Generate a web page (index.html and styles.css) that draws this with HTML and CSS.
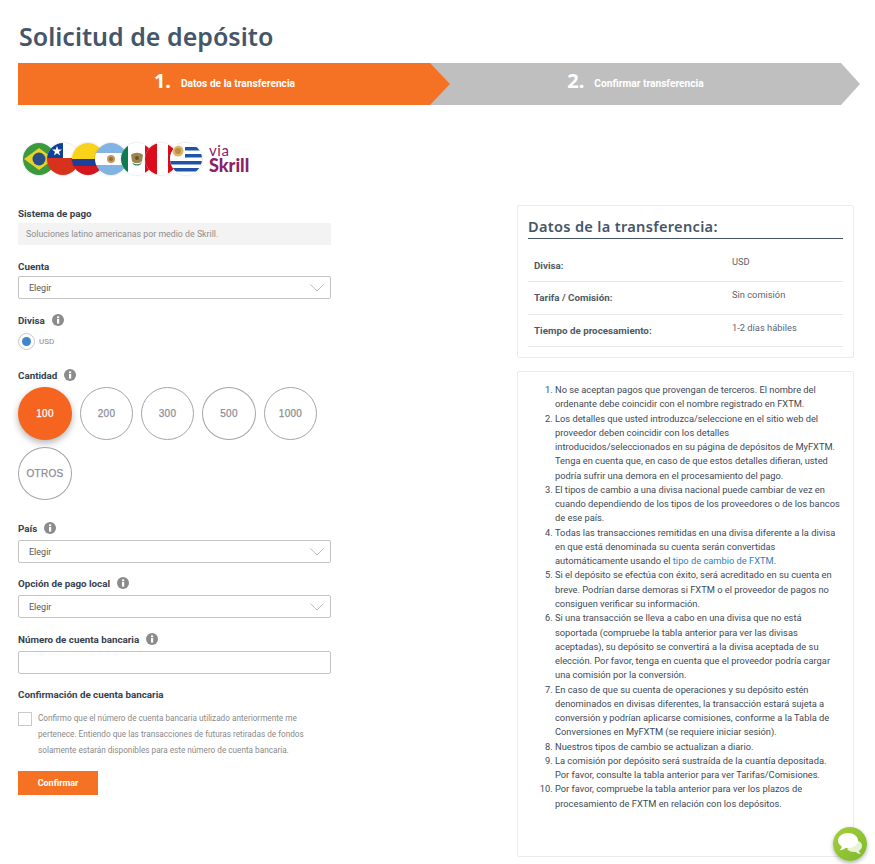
FILE: index.html
```html
<!DOCTYPE html>
<html lang="es">
<head>
<meta charset="utf-8">
<title>Solicitud de depósito</title>
<link rel="stylesheet" href="styles.css">
</head>
<body>
<svg class="defs" width="0" height="0" aria-hidden="true">
  <symbol id="info" viewBox="0 0 12 12">
    <circle cx="6" cy="6" r="6" fill="#8b8b8b"/>
    <rect x="5" y="5" width="2.2" height="4.6" fill="#fff"/>
    <rect x="5" y="2.4" width="2.2" height="1.8" fill="#fff"/>
  </symbol>
  <symbol id="chev" viewBox="0 0 14 8">
    <path d="M.5.5 7 7 13.5.5" fill="none" stroke="#bdbdbd" stroke-width="1"/>
  </symbol>
</svg>
<main class="page">
  <h1 class="title">Solicitud de depósito</h1>
  <ol class="steps">
    <li class="step step-on"><b class="step-num">1.</b><span class="step-text">Datos de la transferencia</span></li>
    <li class="step step-off"><b class="step-num">2.</b><span class="step-text">Confirmar transferencia</span></li>
  </ol>

  <div class="logo">
    <svg class="flags" width="190" height="36" viewBox="0 0 190 36">
      <defs>
        <clipPath id="c1"><circle cx="17" cy="18" r="16"/></clipPath>
        <clipPath id="c2"><circle cx="41" cy="18" r="16"/></clipPath>
        <clipPath id="c3"><circle cx="66" cy="18" r="16"/></clipPath>
        <clipPath id="c4"><circle cx="89" cy="18" r="16"/></clipPath>
        <clipPath id="c5"><circle cx="115" cy="18" r="16"/></clipPath>
        <clipPath id="c6"><circle cx="139" cy="18" r="16"/></clipPath>
        <clipPath id="c7"><circle cx="164" cy="18" r="16"/></clipPath>
        <filter id="halo" x="-20%" y="-20%" width="140%" height="140%"><feDropShadow dx="0" dy="0" stdDeviation="1.2" flood-color="#000" flood-opacity=".18"/></filter>
      </defs>
      <g filter="url(#halo)"><g clip-path="url(#c1)">
        <rect x="1" y="2" width="32" height="32" fill="#3b9a3f"/>
        <path d="M17 7 32 18 17 29 2 18z" fill="#e9d22c"/>
        <circle cx="17" cy="18" r="6.500" fill="#2a4f86"/>
      </g></g>
      <g filter="url(#halo)"><g clip-path="url(#c2)">
        <rect x="25" y="2" width="32" height="16" fill="#fff"/>
        <rect x="25" y="2" width="16" height="15" fill="#113f96"/>
        <rect x="25" y="17" width="32" height="17" fill="#d6321f"/>
        <path d="M35 5l1.300 3.600h3.700l-3 2.200 1.100 3.600-3.100-2.200-3.100 2.200 1.100-3.600-3-2.200h3.700z" fill="#fff"/>
      </g></g>
      <g filter="url(#halo)"><g clip-path="url(#c3)">
        <rect x="50" y="2" width="32" height="16" fill="#f9d21d"/>
        <rect x="50" y="18" width="32" height="7" fill="#1e3f99"/>
        <rect x="50" y="25" width="32" height="9" fill="#d3151f"/>
      </g></g>
      <g filter="url(#halo)"><g clip-path="url(#c4)">
        <rect x="73" y="2" width="32" height="11" fill="#82b4e3"/>
        <rect x="73" y="12" width="32" height="12" fill="#fff"/>
        <rect x="73" y="24" width="32" height="10" fill="#82b4e3"/>
        <circle cx="89" cy="18" r="4" fill="#c9975a"/>
        <circle cx="89" cy="18" r="2" fill="#8f6b3d"/>
      </g></g>
      <g filter="url(#halo)"><g clip-path="url(#c5)">
        <rect x="99" y="2" width="32" height="32" fill="#fff"/>
        <rect x="99" y="2" width="7" height="32" fill="#0b7a4f"/>
        <rect x="123" y="2" width="8" height="32" fill="#d8101f"/>
        <path d="M109 14c3-3 9-3 12 0l-1 6c-2 3-8 3-10 0z" fill="#9c8650"/>
        <path d="M110 21c2 3 8 3 10 0l-1 2c-2 2-6 2-8 0z" fill="#3f8d5a"/>
        <circle cx="115" cy="17" r="2" fill="#6b5528"/>
      </g></g>
      <g filter="url(#halo)"><g clip-path="url(#c6)">
        <rect x="123" y="2" width="32" height="32" fill="#fff"/>
        <rect x="123" y="2" width="12" height="32" fill="#d9101f"/>
        <rect x="146" y="2" width="9" height="32" fill="#d9101f"/>
      </g></g>
      <g filter="url(#halo)"><g clip-path="url(#c7)">
        <rect x="148" y="2" width="32" height="32" fill="#fff"/>
        <rect x="148" y="6" width="32" height="3.500" fill="#1f55a8"/>
        <rect x="148" y="13" width="32" height="3.500" fill="#1f55a8"/>
        <rect x="148" y="20" width="32" height="3.500" fill="#1f55a8"/>
        <rect x="148" y="27" width="32" height="3.500" fill="#1f55a8"/>
        <rect x="148" y="2" width="15" height="16" fill="#fff"/>
        <circle cx="156" cy="10" r="5.500" fill="#d9b66a"/>
        <circle cx="156" cy="10" r="3" fill="#b98f45"/>
      </g></g>
    </svg>
    <div class="via"><span class="via-a">via</span><span class="via-b">Skrill</span></div>
  </div>

  <div class="columns">
    <form class="form">
      <div class="field field-tight">
        <div class="label">Sistema de pago</div>
        <div class="readonly">Soluciones latino americanas por medio de Skrill.</div>
      </div>
      <div class="field field-tight">
        <div class="label">Cuenta</div>
        <div class="select"><span>Elegir</span><svg class="chev"><use href="#chev"/></svg></div>
      </div>
      <div class="field field-divisa">
        <div class="label">Divisa <svg class="info"><use href="#info"/></svg></div>
        <div class="radio-row"><span class="radio"><i class="dot"></i></span><span class="radio-text">USD</span></div>
      </div>
      <div class="field field-amount">
        <div class="label">Cantidad <svg class="info"><use href="#info"/></svg></div>
        <div class="amounts">
          <span class="amount amount-wide amount-on">100</span>
          <span class="amount">200</span>
          <span class="amount">300</span>
          <span class="amount amount-wide">500</span>
          <span class="amount">1000</span>
          <span class="amount amount-wide">OTROS</span>
        </div>
      </div>
      <div class="field">
        <div class="label">País <svg class="info"><use href="#info"/></svg></div>
        <div class="select"><span>Elegir</span><svg class="chev"><use href="#chev"/></svg></div>
      </div>
      <div class="field field-wide">
        <div class="label">Opción de pago local <svg class="info"><use href="#info"/></svg></div>
        <div class="select"><span>Elegir</span><svg class="chev"><use href="#chev"/></svg></div>
      </div>
      <div class="field">
        <div class="label">Número de cuenta bancaria <svg class="info"><use href="#info"/></svg></div>
        <div class="select"></div>
      </div>
      <div class="field">
        <div class="label">Confirmación de cuenta bancaria</div>
        <div class="check-row">
          <span class="check"></span>
          <p class="check-text">Confirmo que el número de cuenta bancaria utilizado anteriormente me pertenece. Entiendo que las transacciones de futuras retiradas de fondos solamente estarán disponibles para este número de cuenta bancaria.</p>
        </div>
      </div>
      <div class="submit">Confirmar</div>
    </form>

    <aside class="side">
      <section class="panel panel-data">
        <h2 class="panel-title">Datos de la transferencia:</h2>
        <div class="row"><b class="row-key">Divisa:</b><span class="row-val">USD</span></div>
        <div class="row"><b class="row-key">Tarifa / Comisión:</b><span class="row-val">Sin comisión</span></div>
        <div class="row"><b class="row-key">Tiempo de procesamiento:</b><span class="row-val">1-2 días hábiles</span></div>
      </section>
      <section class="panel panel-notes">
        <ol class="notes">
          <li>No se aceptan pagos que provengan de terceros. El nombre del<br>ordenante debe coincidir con el nombre registrado en FXTM.</li>
          <li>Los detalles que usted introduzca/seleccione en el sitio web del<br>proveedor deben coincidir con los detalles<br>introducidos/seleccionados en su página de depósitos de MyFXTM.<br>Tenga en cuenta que, en caso de que estos detalles difieran, usted<br>podría sufrir una demora en el procesamiento del pago.</li>
          <li>El tipos de cambio a una divisa nacional puede cambiar de vez en<br>cuando dependiendo de los tipos de los proveedores o de los bancos<br>de ese país.</li>
          <li>Todas las transacciones remitidas en una divisa diferente a la divisa<br>en que está denominada su cuenta serán convertidas<br>automáticamente usando el <a class="link">tipo de cambio de FXTM</a>.</li>
          <li>Si el depósito se efectúa con éxito, será acreditado en su cuenta en<br>breve. Podrían darse demoras si FXTM o el proveedor de pagos no<br>consiguen verificar su información.</li>
          <li>Si una transacción se lleva a cabo en una divisa que no está<br>soportada (compruebe la tabla anterior para ver las divisas<br>aceptadas), su depósito se convertirá a la divisa aceptada de su<br>elección. Por favor, tenga en cuenta que el proveedor podría cargar<br>una comisión por la conversión.</li>
          <li>En caso de que su cuenta de operaciones y su depósito estén<br>denominados en divisas diferentes, la transacción estará sujeta a<br>conversión y podrían aplicarse comisiones, conforme a la Tabla de<br>Conversiones en MyFXTM (se requiere iniciar sesión).</li>
          <li>Nuestros tipos de cambio se actualizan a diario.</li>
          <li>La comisión por depósito será sustraída de la cuantía depositada.<br>Por favor, consulte la tabla anterior para ver Tarifas/Comisiones.</li>
          <li>Por favor, compruebe la tabla anterior para ver los plazos de<br>procesamiento de FXTM en relación con los depósitos.</li>
        </ol>
      </section>
    </aside>
  </div>
</main>
<div class="chat">
  <svg width="26" height="24" viewBox="0 0 26 24">
    <path d="M17 8c4.500 0 8 2.500 8 6 0 2-1.200 3.700-3 4.800.2 1.200 1 2.400 2 3.200-2.200 0-4-.8-5.300-2-.6.100-1.100.100-1.700.100-3 0-5.500-1.200-6.800-3z" fill="#e8f3d6"/>
    <path d="M11 1c5.500 0 10 3.300 10 7.500S16.500 16 11 16c-.8 0-1.500-.1-2.200-.2C7.300 17.300 5 18.200 2.500 18.200c1.200-1 2-2.300 2.300-3.700C2.500 13.100 1 11 1 8.500 1 4.300 5.500 1 11 1z" fill="#fff"/>
  </svg>
</div>
</body>
</html>
```

FILE: styles.css
```css
* { box-sizing: border-box; }
html, body { margin: 0; padding: 0; }
body {
  width: 875px;
  height: 864px;
  overflow: hidden;
  position: relative;
  background: #fff;
  font-family: Roboto, "Noto Sans", sans-serif;
  color: #3d4a58;
}
.defs { position: absolute; }
.page { padding: 0 15px 0 18px; }

.title {
  margin: 0;
  padding: 19px 0 0 1px;
  height: 63px;
  font-family: "Noto Sans", sans-serif;
  font-size: 25px;
  line-height: 34px;
  font-weight: 600;
  color: #46566a;
}

.steps {
  display: flex;
  list-style: none;
  margin: 0;
  padding: 0;
  height: 42px;
  width: 842px;
}
.step {
  display: flex;
  align-items: center;
  justify-content: center;
  gap: 10px;
  color: #fff;
  height: 42px;
}
.step-on {
  position: relative;
  z-index: 1;
  width: 432px;
  padding-right: 19px;
  background: #f57224;
  clip-path: polygon(0 0, 412px 0, 100% 50%, 412px 100%, 0 100%);
}
.step-off {
  width: 430px;
  margin-left: -20px;
  padding-left: 16px;
  padding-right: 35px;
  background: #bfbfbf;
  clip-path: polygon(0 0, 411px 0, 100% 50%, 411px 100%, 0 100%);
}
.step-num { font-family: "Noto Sans", sans-serif; font-size: 20px; line-height: 24px; margin-top: -6px; font-weight: 700; }
.step-text { font-size: 10.200px; font-weight: 700; line-height: 14px; }

.logo {
  display: flex;
  align-items: center;
  height: 36px;
  margin-top: 36px;
  margin-left: 4px;
}
.flags { flex: none; width: 190px; height: 36px; margin-right: -2px; }
.via { display: flex; flex-direction: column; color: #8a2267; margin-left: -1px; margin-top: -2px; }
.via-a { font-size: 15px; line-height: 13px; font-family: "Lato", sans-serif; letter-spacing: .6px; }
.via-b { font-size: 18px; line-height: 16px; font-weight: 900; font-family: "Lato", sans-serif; }

.columns {
  display: grid;
  grid-template-columns: 313px 337px;
  column-gap: 186px;
  margin-top: 26px;
}

.form { display: flex; flex-direction: column; padding-top: 1px; }
.field { display: flex; flex-direction: column; margin-bottom: 11px; }
.field-wide { margin-bottom: 12px; }
.field-tight { margin-bottom: 12px; }
.label {
  display: flex;
  align-items: center;
  gap: 7px;
  height: 18px;
  margin-bottom: 3px;
  font-size: 9.800px;
  font-weight: 700;
  color: #36424f;
}
.field-tight .label { margin-bottom: 1px; }
.info { width: 12px; height: 12px; }
.readonly {
  height: 22px;
  padding-left: 8px;
  display: flex;
  align-items: center;
  background: #f3f3f3;
  color: #8e8e8e;
  font-size: 8.800px;
}
.select {
  height: 23px;
  display: flex;
  align-items: center;
  justify-content: space-between;
  padding: 0 6px 0 10px;
  border: 1px solid #c4c4c4;
  border-radius: 2px;
  font-size: 9px;
  color: #555;
}
.chev { width: 14px; height: 8px; }

.field-divisa { margin-bottom: 16px; }
.radio-row { display: flex; align-items: center; gap: 4px; height: 17px; margin-top: 1px; }
.radio {
  width: 17px; height: 17px;
  border: 1px solid #c9c9c9;
  border-radius: 50%;
  display: flex;
  align-items: center;
  justify-content: center;
}
.dot { width: 9px; height: 9px; border-radius: 50%; background: #3f86cc; }
.radio-text { font-size: 8px; color: #8a8a8a; }

.field-amount { margin-bottom: 19px; }
.amounts { display: flex; flex-wrap: wrap; gap: 7px 8px; }
.amount {
  width: 53px;
  height: 53px;
  border: 1px solid #a5a5a5;
  border-radius: 50%;
  display: flex;
  align-items: center;
  justify-content: center;
  font-family: "Liberation Sans", sans-serif;
  font-size: 10px;
  letter-spacing: .3px;
  -webkit-text-stroke: .25px currentColor;
  color: #8d8d97;
}
.amount-wide { width: 54px; }
.amount-on {
  background: #f5651f;
  border-color: #f5651f;
  color: #fff;
  box-shadow: 0 3px 7px rgba(0,0,0,.3);
}

.check-row { display: flex; gap: 6px; margin-top: 6px; }
.check { flex: none; width: 14px; height: 14px; border: 1px solid #c9c9c9; }
.check-text {
  margin: -2px 0 0;
  max-width: 270px;
  font-size: 8.200px;
  line-height: 16px;
  color: #8a8a8a;
}
.submit {
  width: 80px;
  height: 24px;
  margin-top: 2px;
  background: #f57224;
  color: #fff;
  font-size: 9px;
  font-weight: 700;
  display: flex;
  align-items: center;
  justify-content: center;
}

.side { display: flex; flex-direction: column; gap: 13px; margin-top: 2px; }
.panel { border: 1px solid #ebebeb; border-radius: 2px; background: #fff; }
.panel-data { height: 153px; padding: 10px 10px 0; }
.panel-title {
  margin: 0;
  height: 23px;
  font-family: "Noto Sans", sans-serif;
  font-size: 14.600px;
  line-height: 20px;
  font-weight: 600;
  color: #46566a;
  border-bottom: 1px solid #46566a;
  letter-spacing: .3px;
}
.row {
  display: flex;
  height: 32.700px;
  border-bottom: 1px solid #e8e8e8;
  padding-left: 6px;
  font-size: 9.800px;
}
.panel-title + .row { height: 43px; padding-top: 10px; }
.panel-title + .row .row-key { padding-top: 10px; }
.row-key { width: 198px; padding-top: 9px; line-height: 14px; color: #4f5a66; }
.row-val { padding-top: 6px; line-height: 14px; color: #5b6570; font-size: 9.300px; }

.panel-notes { height: 486px; }
.notes {
  margin: 0;
  padding: 11px 0 0 37px;
  font-size: 9.300px;
  line-height: 14.270px;
  color: #3d4a58;
  white-space: nowrap;
}
.link { color: #2f7fb8; }

.chat {
  position: absolute;
  left: 833px;
  top: 827px;
  width: 34px;
  height: 34px;
  border-radius: 50%;
  background: linear-gradient(135deg, #a5cf3b, #7db92e);
  box-shadow: 0 2px 4px rgba(0,0,0,.3);
  display: flex;
  align-items: center;
  justify-content: center;
}
```
